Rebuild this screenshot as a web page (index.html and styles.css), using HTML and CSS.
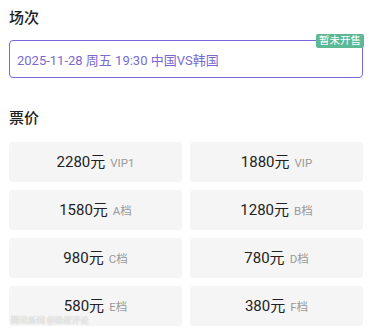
FILE: index.html
```html
<!DOCTYPE html>
<html lang="zh-CN">
<head>
    <meta charset="UTF-8">
    <meta name="viewport" content="width=device-width, initial-scale=1.0">
    <title>选择场次</title>
    <link rel="stylesheet" href="styles.css">
</head>
<body>
    <div class="page">
        <h2 class="section-title">场次</h2>
        <div class="session">
            <span class="session-text">2025-11-28 周五 19:30 中国VS韩国</span>
            <span class="badge">暂未开售</span>
        </div>

        <h2 class="section-title price-title">票价</h2>
        <div class="prices">
            <div class="price-card"><span class="amount">2280元</span><span class="level">VIP1</span></div>
            <div class="price-card"><span class="amount">1880元</span><span class="level">VIP</span></div>
            <div class="price-card"><span class="amount">1580元</span><span class="level">A档</span></div>
            <div class="price-card"><span class="amount">1280元</span><span class="level">B档</span></div>
            <div class="price-card"><span class="amount">980元</span><span class="level">C档</span></div>
            <div class="price-card"><span class="amount">780元</span><span class="level">D档</span></div>
            <div class="price-card"><span class="amount">580元</span><span class="level">E档</span></div>
            <div class="price-card"><span class="amount">380元</span><span class="level">F档</span></div>
        </div>
        <div class="watermark">腾讯新闻 @狼叔评论</div>
    </div>
</body>
</html>
```

FILE: styles.css
```css
body {
    margin: 0;
    background-color: #ffffff;
    font-family: Roboto, "Noto Sans CJK SC", sans-serif;
    color: #222222;
}
.page {
    position: relative;
    padding: 7px 10px 0 9px;
}
.section-title {
    margin: 0;
    font-size: 15px;
    font-weight: 500;
    line-height: 22px;
    color: #222222;
}
.session {
    position: relative;
    margin-top: 11px;
    height: 36px;
    border: 1.5px solid #7a67dc;
    border-radius: 4px;
    display: flex;
    align-items: center;
    padding-left: 7px;
}
.session-text {
    font-size: 13px;
    color: #7a6ad0;
}
.badge {
    position: absolute;
    top: -7px;
    right: -2px;
    background-color: #5db894;
    color: #ffffff;
    font-size: 10.5px;
    line-height: 14px;
    padding: 0 3px;
    border-radius: 2px;
}
.price-title {
    margin-top: 29px;
}
.prices {
    margin-top: 13px;
    display: grid;
    grid-template-columns: 1fr 1fr;
    column-gap: 8px;
    row-gap: 8px;
}
.price-card {
    height: 40px;
    line-height: 40px;
    background-color: #f5f5f5;
    border-radius: 4px;
    text-align: center;
}
.amount {
    font-size: 15px;
    color: #222222;
}
.level {
    font-size: 11.5px;
    color: #9a9a9a;
    margin-left: 5px;
}
.watermark {
    position: absolute;
    left: 11px;
    top: 315px;
    font-size: 8.5px;
    line-height: 10px;
    color: rgba(255, 255, 255, 0.85);
    text-shadow: 0 0 1px rgba(0, 0, 0, 0.35);
}
```
